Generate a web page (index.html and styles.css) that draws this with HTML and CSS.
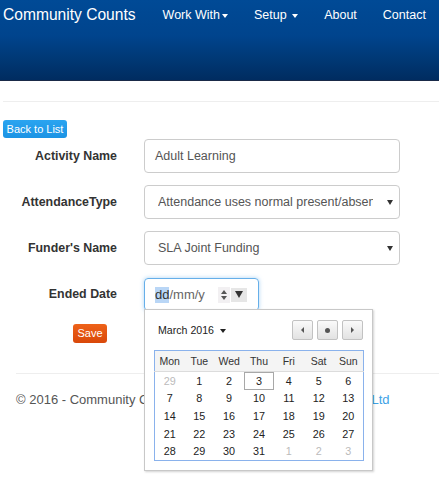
FILE: index.html
```html
<!DOCTYPE html>
<html lang="en">
<head>
<meta charset="utf-8">
<title>Community Counts</title>
<link rel="stylesheet" href="styles.css">
</head>
<body>
<header class="navbar">
  <div class="nav-row">
    <span class="brand">Community Counts</span>
    <ul class="nav-links">
      <li>Work With<span class="caret"></span></li>
      <li>Setup <span class="caret"></span></li>
      <li>About</li>
      <li>Contact</li>
    </ul>
  </div>
</header>

<main class="page">
  <hr class="top-rule">
  <button class="btn btn-back" type="button">Back to List</button>

  <form class="form">
    <label class="label">Activity Name</label>
    <div class="control">Adult Learning</div>

    <label class="label">AttendanceType</label>
    <div class="control select"><span class="select-text">Attendance uses normal present/absent marking</span></div>

    <label class="label">Funder's Name</label>
    <div class="control select"><span class="select-text">SLA Joint Funding</span></div>

    <label class="label">Ended Date</label>
    <div class="date-wrap">
      <div class="date-field">
        <span class="seg-sel">dd</span><span class="seg">/mm/y</span>
        <span class="spin"><span class="spin-up"></span><span class="spin-down"></span></span>
        <span class="drop"><span class="drop-tri"></span></span>
      </div>
      <div class="picker">
        <div class="picker-head">
          <span class="month">March 2016<span class="month-caret"></span></span>
          <div class="picker-btns">
            <span class="pbtn"><span class="tri-left"></span></span>
            <span class="pbtn"><span class="dot"></span></span>
            <span class="pbtn"><span class="tri-right"></span></span>
          </div>
        </div>
        <table class="cal">
          <thead>
            <tr><th>Mon</th><th>Tue</th><th>Wed</th><th>Thu</th><th>Fri</th><th>Sat</th><th>Sun</th></tr>
          </thead>
          <tbody>
            <tr><td class="other">29</td><td>1</td><td>2</td><td class="today">3</td><td>4</td><td>5</td><td>6</td></tr>
            <tr><td>7</td><td>8</td><td>9</td><td>10</td><td>11</td><td>12</td><td>13</td></tr>
            <tr><td>14</td><td>15</td><td>16</td><td>17</td><td>18</td><td>19</td><td>20</td></tr>
            <tr><td>21</td><td>22</td><td>23</td><td>24</td><td>25</td><td>26</td><td>27</td></tr>
            <tr><td>28</td><td>29</td><td>30</td><td>31</td><td class="other">1</td><td class="other">2</td><td class="other">3</td></tr>
          </tbody>
        </table>
      </div>
    </div>
  </form>

  <button class="btn btn-save" type="button">Save</button>
</main>

<footer class="footer">
  <p>&copy; 2016 - Community Counts - <a href="#">Community Counts IT Solution Ltd</a></p>
</footer>
</body>
</html>
```

FILE: styles.css
```css
html, body {
  margin: 0;
  padding: 0;
  background: #fff;
}

body {
  font-family: "Liberation Sans", Arial, sans-serif;
  color: #333;
  min-height: 496px;
}

/* ---------- navbar ---------- */
.navbar {
  height: 80px;
  background: linear-gradient(#004a96 0%, #00448d 45%, #003a78 70%, #002c60 100%);
  border-bottom: 1px solid #1a2a48;
}

.nav-row {
  display: flex;
  align-items: center;
  height: 30px;
  padding-left: 3px;
  color: #fff;
}

.brand {
  font-size: 15.6px;
  white-space: nowrap;
}

.nav-links {
  display: flex;
  gap: 26px;
  list-style: none;
  margin: 0 0 0 27px;
  padding: 0;
  font-size: 12.5px;
  white-space: nowrap;
}

.caret {
  display: inline-block;
  width: 0;
  height: 0;
  margin-left: 2px;
  vertical-align: middle;
  border-top: 4px solid #fff;
  border-left: 3px solid transparent;
  border-right: 3px solid transparent;
}

/* ---------- page ---------- */
.page {
  padding: 20px 0 0 3px;
}

.top-rule {
  margin: 0;
  height: 0;
  border: 0;
  border-top: 1px solid #eee;
}

.btn {
  display: block;
  border: 0;
  border-radius: 3px;
  color: #fff;
  font-family: "Liberation Sans", Arial, sans-serif;
  font-size: 11px;
  line-height: 18px;
  padding: 0;
  cursor: pointer;
}

.btn-back {
  margin-top: 18px;
  width: 64px;
  height: 18px;
  background: linear-gradient(#2aa4f0, #1b93e4);
}

.btn-save {
  margin: 13px 0 0 70px;
  width: 34px;
  height: 19px;
  line-height: 19px;
  background: linear-gradient(#ee6219, #d9480a);
}

/* ---------- form ---------- */
.form {
  display: grid;
  grid-template-columns: 114px 256px;
  column-gap: 27px;
  row-gap: 12px;
  align-items: center;
  margin-top: 1px;
}

.label {
  text-align: right;
  font-size: 12.4px;
  font-weight: bold;
  color: #333;
  white-space: nowrap;
}

.control {
  position: relative;
  box-sizing: border-box;
  height: 34px;
  border: 1px solid #ccc;
  border-radius: 4px;
  padding: 0 10px;
  font-size: 12.5px;
  line-height: 32px;
  color: #555;
  white-space: nowrap;
  overflow: hidden;
}

.select {
  padding: 0 26px 0 13px;
}

.select-text {
  display: block;
  overflow: hidden;
}

.select::after {
  content: "";
  position: absolute;
  right: 6px;
  top: 14px;
  border-top: 5px solid #333;
  border-left: 3px solid transparent;
  border-right: 3px solid transparent;
}

/* ---------- date field ---------- */
.date-wrap {
  position: relative;
  height: 34px;
}

.date-field {
  box-sizing: border-box;
  display: flex;
  align-items: center;
  width: 115px;
  height: 33px;
  margin-top: 1px;
  padding-left: 10px;
  border: 1px solid #66afe9;
  border-radius: 4px;
  box-shadow: 0 0 4px rgba(102, 175, 233, 0.55);
  font-size: 13px;
  color: #666;
}

.seg-sel {
  background: #b9d6f6;
  color: #333;
  line-height: 16px;
}

.seg {
  line-height: 16px;
}

.spin {
  display: flex;
  flex-direction: column;
  align-items: center;
  justify-content: center;
  gap: 2px;
  width: 12px;
  height: 16px;
  margin-left: 13px;
  background: #f2f0f2;
}

.spin-up {
  border-bottom: 4px solid #555;
  border-left: 3.5px solid transparent;
  border-right: 3.5px solid transparent;
}

.spin-down {
  border-top: 4px solid #555;
  border-left: 3.5px solid transparent;
  border-right: 3.5px solid transparent;
}

.drop {
  display: flex;
  align-items: center;
  justify-content: center;
  width: 16px;
  height: 14px;
  margin-left: 1px;
  background: #e6e6e6;
}

.drop-tri {
  border-top: 7px solid #333;
  border-left: 4.5px solid transparent;
  border-right: 4.5px solid transparent;
}

/* ---------- picker popup ---------- */
.picker {
  position: absolute;
  top: 32px;
  left: 0;
  z-index: 5;
  box-sizing: border-box;
  width: 229px;
  padding: 10px 9px 9px 9px;
  background: #fff;
  border: 1px solid #c8c8c8;
  box-shadow: 1px 1px 2px rgba(0, 0, 0, 0.18);
}

.picker-head {
  display: flex;
  align-items: center;
  justify-content: space-between;
  height: 20px;
  margin-bottom: 10px;
}

.month {
  margin-left: 4px;
  font-size: 10.6px;
  color: #222;
}

.month-caret {
  display: inline-block;
  margin-left: 6px;
  vertical-align: middle;
  border-top: 4px solid #222;
  border-left: 3px solid transparent;
  border-right: 3px solid transparent;
}

.picker-btns {
  display: flex;
  gap: 4px;
}

.pbtn {
  box-sizing: border-box;
  display: flex;
  align-items: center;
  justify-content: center;
  width: 21px;
  height: 20px;
  border: 1px solid #c2c2c2;
  border-radius: 2px;
  background: linear-gradient(#fafafa, #e2e2e2);
}

.tri-left {
  border-right: 3px solid #555;
  border-top: 3px solid transparent;
  border-bottom: 3px solid transparent;
}

.tri-right {
  border-left: 3px solid #555;
  border-top: 3px solid transparent;
  border-bottom: 3px solid transparent;
}

.dot {
  width: 5px;
  height: 5px;
  border-radius: 50%;
  background: #555;
}

.cal {
  width: 210px;
  border-collapse: collapse;
  border: 1px solid #8ab2ec;
  table-layout: fixed;
  font-size: 10.8px;
  color: #222;
}

.cal th {
  height: 20px;
  padding: 0;
  font-weight: normal;
  font-size: 10.5px;
  color: #333;
  background: #f4f4f4;
  border-bottom: 1px solid #dcdcdc;
}

.cal td {
  height: 17.6px;
  padding: 0;
  text-align: center;
}

.cal td.other {
  color: #bbb;
}

.cal td.today {
  box-shadow: inset 0 0 0 1px #a8a8a8;
}

/* ---------- footer ---------- */
.footer {
  margin: 30px 0 0 16px;
  padding-bottom: 90px;
  border-top: 1px solid #eee;
}

.footer p {
  margin: 17px 0 0 0;
  font-size: 13px;
  line-height: 18px;
  color: #555;
  white-space: nowrap;
}

.footer a {
  color: #3ea2e6;
  text-decoration: none;
}
```
